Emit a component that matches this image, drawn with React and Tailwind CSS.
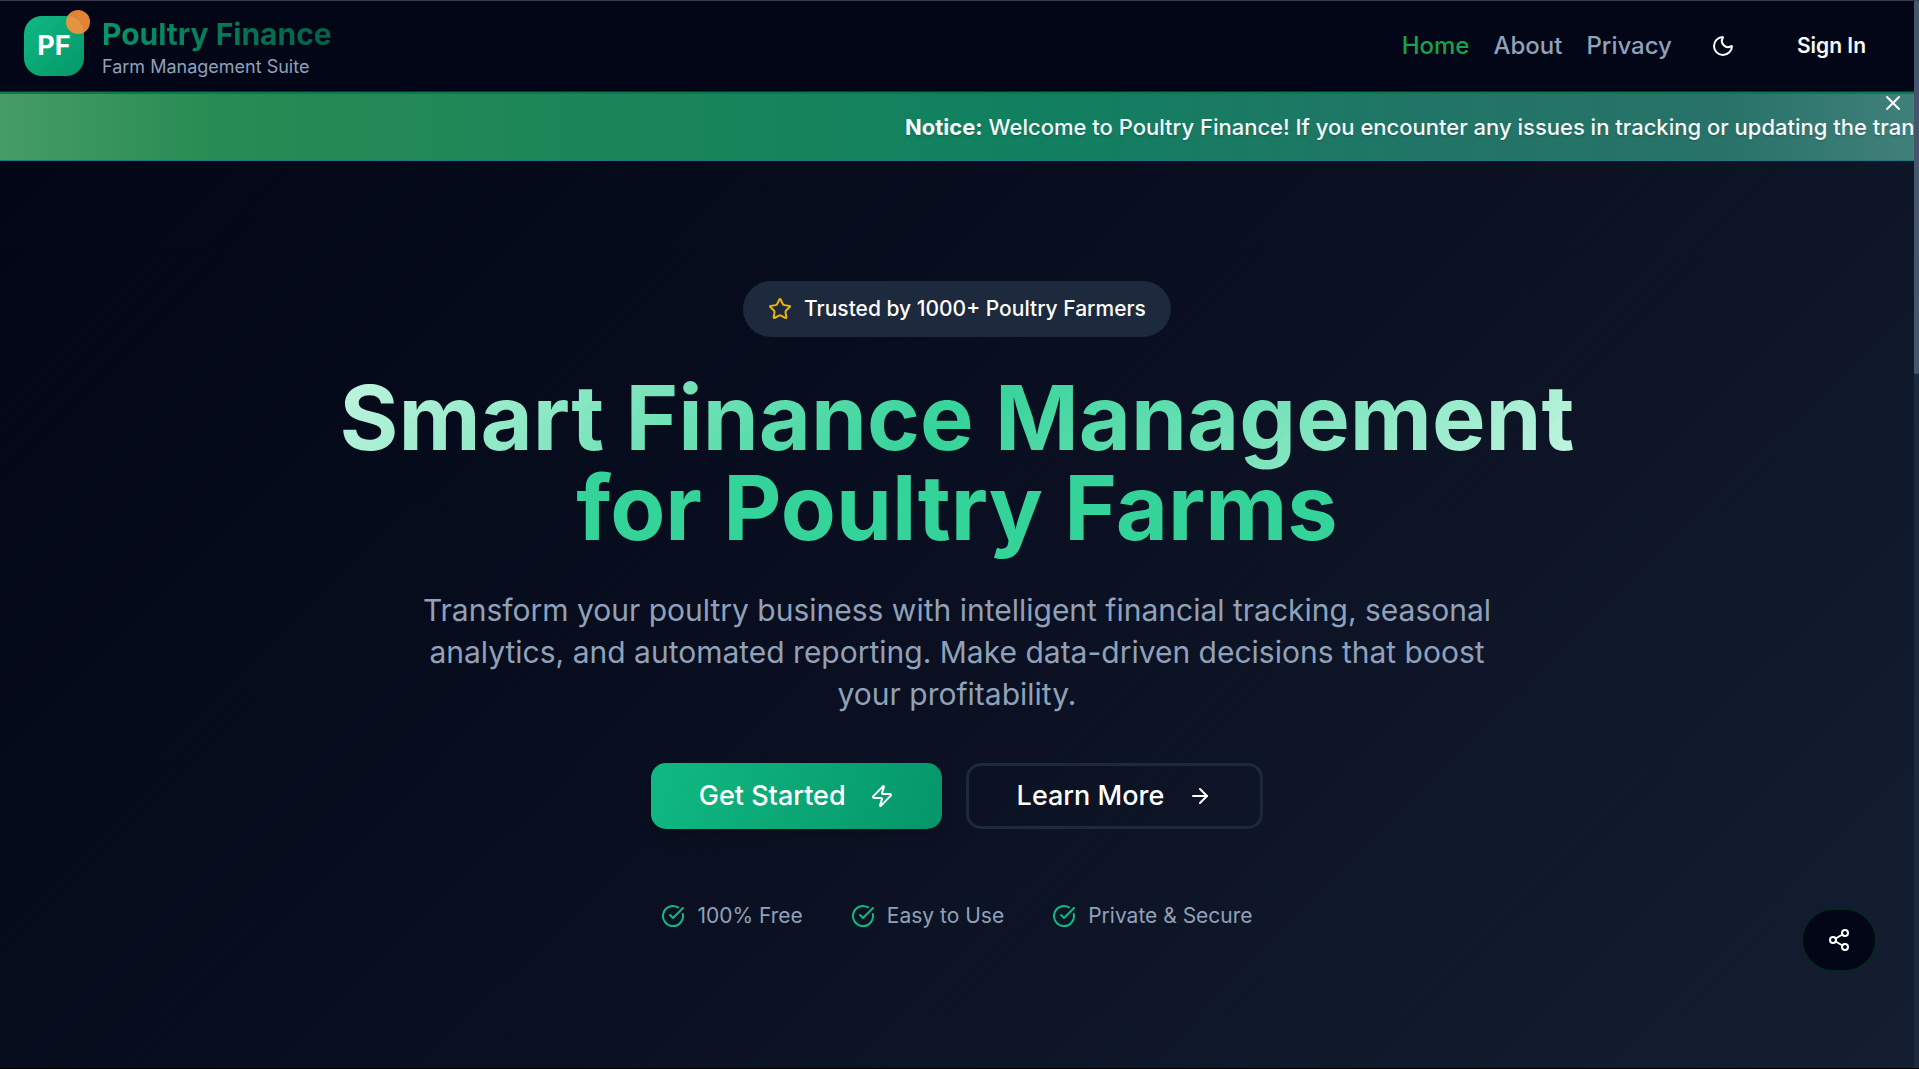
import React, { useState } from 'react';
import { ArrowRight, CircleCheckBig, Moon, Share2, Star, X, Zap } from 'lucide-react';

const NAV_LINKS = [
  { label: 'Home', href: '#home', active: true },
  { label: 'About', href: '#about', active: false },
  { label: 'Privacy', href: '#privacy', active: false },
];

const PERKS = ['100% Free', 'Easy to Use', 'Private & Secure'];

function Logo() {
  return (
    <a href="#home" className="flex items-center gap-[18px]">
      <span className="relative flex size-[60px] items-center justify-center rounded-[18px] bg-linear-to-br from-[#10b981] to-[#059669] text-[27px] font-bold text-white">
        PF
        <span className="absolute -top-1.5 -right-1.5 size-6 rounded-full bg-[#fb923c]/90" />
      </span>
      <span className="flex flex-col pt-1.5">
        <span className="bg-linear-to-r from-[#059669] to-[#065f46] bg-clip-text text-[30px] leading-9 font-bold text-transparent">
          Poultry Finance
        </span>
        <span className="text-[18px] leading-[30px] text-slate-400">Farm Management Suite</span>
      </span>
    </a>
  );
}

function Header() {
  return (
    <header className="flex h-[92px] items-center justify-between border-t border-b border-t-[#3b3645] border-b-[#1e293b] bg-[#030616] pr-12 pl-6">
      <Logo />
      <div className="flex items-center">
        <nav className="flex items-center gap-6 text-[24px] font-medium">
          {NAV_LINKS.map((link) => (
            <a
              key={link.label}
              href={link.href}
              className={link.active ? 'text-[#16a34a]' : 'text-slate-400'}
            >
              {link.label}
            </a>
          ))}
        </nav>
        <button
          type="button"
          aria-label="Toggle theme"
          className="ml-[39px] flex size-6 items-center justify-center text-white"
        >
          <Moon className="size-6" aria-hidden="true" />
        </button>
        <button type="button" className="ml-[62px] text-[21px] font-semibold text-slate-50">
          Sign In
        </button>
      </div>
    </header>
  );
}

function NoticeBanner({ onClose }) {
  return (
    <div className="relative h-[69px] overflow-hidden border-t-2 border-b border-t-[#0b7a4c] border-b-[#1b7a80] bg-[linear-gradient(90deg,#469c66_0%,#278c53_11%,#248a55_16%,#10805f_53%,#217566_75%,#287269_90%,#40807a_100%)]">
      <p className="flex h-full items-center pl-[905px] text-[22px] font-medium whitespace-nowrap text-slate-50 text-shadow-sm">
        <span>
          <strong className="font-bold">Notice:</strong> Welcome to Poultry Finance! If you encounter
          any issues in tracking or updating the transactions, please contact support.
        </span>
      </p>
      <button
        type="button"
        aria-label="Dismiss notice"
        onClick={onClose}
        className="absolute -top-[3px] right-[9px] text-white"
      >
        <X className="size-6" aria-hidden="true" />
      </button>
    </div>
  );
}

function Hero() {
  return (
    <main className="flex flex-1 flex-col items-center bg-[linear-gradient(135deg,#020617_0%,#0a1021_50%,#0f172a_75%,#151e30_100%)] pt-[120px] text-center">
      <div className="flex h-14 items-center gap-3 rounded-full bg-slate-800 px-[25px] text-[21px] font-medium text-white">
        <Star className="size-6 text-[#eab308]" aria-hidden="true" />
        Trusted by 1000+ Poultry Farmers
      </div>

      <h1 className="mt-9 w-full max-w-[1280px] text-[90px] leading-[90px] font-bold text-[#34d399]">
        <span className="bg-[linear-gradient(135deg,#c2f5e0,#34d399,#c2f5e0)] bg-clip-text text-transparent">
          Smart Finance Management
        </span>
        <br />
        for Poultry Farms
      </h1>

      <p className="mt-9 max-w-[1120px] text-[30px] leading-[42px] text-slate-400">
        Transform your poultry business with intelligent financial tracking, seasonal analytics, and
        automated reporting. Make data-driven decisions that boost your profitability.
      </p>

      <div className="mt-12 flex gap-6 text-[27px] font-medium text-white">
        <button
          type="button"
          className="flex h-[66px] items-center gap-6 rounded-[15px] bg-[linear-gradient(110deg,#10b981,#059669)] px-12 shadow-lg"
        >
          Get Started
          <Zap className="size-6" aria-hidden="true" />
        </button>
        <button
          type="button"
          className="flex h-[66px] items-center gap-6 rounded-[15px] border-3 border-slate-800 px-12"
        >
          Learn More
          <ArrowRight className="size-6" aria-hidden="true" />
        </button>
      </div>

      <ul className="mt-[72px] flex gap-12 text-[21px] leading-[30px] text-slate-400">
        {PERKS.map((perk) => (
          <li key={perk} className="flex items-center gap-3">
            <CircleCheckBig className="size-6 text-[#10b981]" aria-hidden="true" />
            {perk}
          </li>
        ))}
      </ul>
    </main>
  );
}

function ShareButton() {
  return (
    <button
      type="button"
      aria-label="Share"
      className="fixed right-[42px] bottom-[97px] flex h-16 w-[76px] items-center justify-center rounded-full border-2 border-[#05271f] bg-[#020617] text-white"
    >
      <Share2 className="size-6" aria-hidden="true" />
    </button>
  );
}

export default function App() {
  const [showNotice, setShowNotice] = useState(true);

  return (
    <div className="flex min-h-screen border-b border-black font-['Inter',sans-serif]">
      <div className="flex min-w-0 flex-1 flex-col">
        <Header />
        {showNotice && <NoticeBanner onClose={() => setShowNotice(false)} />}
        <Hero />
      </div>
      {/* scroll track */}
      <div className="w-[5px] bg-slate-800" aria-hidden="true">
        <div className="h-[35vh] rounded-full bg-slate-600" />
      </div>
      <ShareButton />
    </div>
  );
}
